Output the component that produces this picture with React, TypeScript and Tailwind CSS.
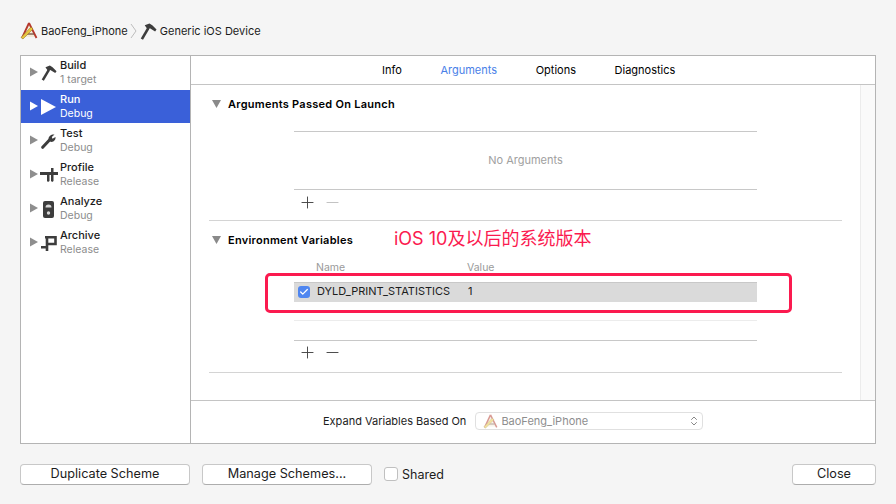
import { Check, ChevronsUpDown, Minus, Plus } from 'lucide-react';

// ── Icons ─────────────────────────────────────────────────────────────────────
function XcodeApp({ muted = false, size = 18 }: { muted?: boolean; size?: number }) {
  return (
    <svg width={size} height={size} viewBox="0 0 18 18" className={muted ? 'opacity-50' : ''}>
      <path d="M9 2 L3 15 H15 Z" fill="#f4ead8" />
      <path d="M9 1 L2 16 M9 1 L16.5 16" stroke="#b5382c" strokeWidth="1.8" fill="none" />
      <path d="M4.5 12 H14" stroke="#7d5a48" strokeWidth="1.4" />
      <path d="M1 15.5 L11 5 L13 7 L3 17 Z" fill="#e8c640" stroke="#8a6d1a" strokeWidth="0.5" />
    </svg>
  );
}

function Hammer({ size = 16, color = '#3d3d3d' }: { size?: number; color?: string }) {
  return (
    <svg width={size} height={size} viewBox="0 0 18 18">
      <path d="M2 17 L8.5 6" stroke={color} strokeWidth="2.8" />
      <path d="M5 2.5 L10 0.5 L13 2.5 L17.5 7 L16 9 L10.5 5.5 L8.5 7.5 Z" fill={color} />
    </svg>
  );
}

function Wrench() {
  return (
    <svg width="15" height="15" viewBox="0 0 15 15">
      <path d="M1.7 13.3 L8.5 6" stroke="#3d3d3d" strokeWidth="3" strokeLinecap="round" />
      <path d="M7.5 5 C7.5 2 10.5 0 13.5 0.5 L10.8 3 L11.5 4.8 L14.5 3 C15 6 12 9 9 7.5 Z" fill="#3d3d3d" />
    </svg>
  );
}

function Caliper() {
  return (
    <svg width="18" height="14" viewBox="0 0 18 14">
      <path d="M0 4 H18 V7 H0 Z" fill="#3d3d3d" />
      <path d="M7 7 H9.5 V13 L8 14 L7 13 Z M11 0 H13.5 V13 L12.2 14 L11 13 Z" fill="#3d3d3d" />
    </svg>
  );
}

function Gauge() {
  return (
    <svg width="11" height="17" viewBox="0 0 11 17">
      <rect x="0" y="0" width="11" height="17" rx="2" fill="#3d3d3d" />
      <path d="M2.5 6.5 A3 3 0 0 1 8.5 6.5 Z" fill="#d8d8d8" />
      <circle cx="5.5" cy="12" r="1.7" fill="#d8d8d8" />
    </svg>
  );
}

function Clamp() {
  return (
    <svg width="16" height="16" viewBox="0 0 16 16">
      <path d="M4 2.2 H14.5 V9 H6" stroke="#3d3d3d" strokeWidth="2.6" fill="none" />
      <path d="M6 3 V16" stroke="#3d3d3d" strokeWidth="2.6" />
      <path d="M0 11 H5 V13.5 H0 Z" fill="#3d3d3d" />
    </svg>
  );
}

function Disclosure({ white = false }: { white?: boolean }) {
  return (
    <svg width="8" height="10" viewBox="0 0 8 10" className="shrink-0 -mt-[2px]">
      <path d="M0 0.5 L8 5 L0 9.5 Z" fill={white ? '#ffffff' : '#8e8e8e'} />
    </svg>
  );
}

function SectionHead({ title }: { title: string }) {
  return (
    <div className="flex items-center gap-[7px] pl-[3px]">
      <svg width="9" height="8" viewBox="0 0 9 8" className="shrink-0">
        <path d="M0 0 H9 L4.5 8 Z" fill="#8a8a8a" />
      </svg>
      <span className="text-[11px] font-semibold tracking-[0.26px] text-black">{title}</span>
    </div>
  );
}

// ── Data ──────────────────────────────────────────────────────────────────────
const ACTIONS = [
  { name: 'Build', sub: '1 target', icon: <Hammer /> },
  { name: 'Run', sub: 'Debug', active: true },
  { name: 'Test', sub: 'Debug', icon: <Wrench /> },
  { name: 'Profile', sub: 'Release', icon: <Caliper /> },
  { name: 'Analyze', sub: 'Debug', icon: <Gauge /> },
  { name: 'Archive', sub: 'Release', icon: <Clamp /> },
];

const TABS = ['Info', 'Arguments', 'Options', 'Diagnostics'];

// ── Page ──────────────────────────────────────────────────────────────────────
export default function App() {
  return (
    <div className="w-[896px] h-[504px] overflow-hidden bg-[#f5f5f5] text-[11px] text-[#1c1c1c] flex flex-col px-[20px] font-['Inter','Noto_Sans_CJK_SC',sans-serif]">
      {/* breadcrumb */}
      <div className="h-[55px] flex items-center pt-[7px]">
        <XcodeApp />
        <span className="ml-[3px]">BaoFeng_iPhone</span>
        <svg width="7" height="16" viewBox="0 0 7 16" className="ml-[2px]">
          <path d="M1 1 L6 8 L1 15" stroke="#bdbdbd" fill="none" />
        </svg>
        <span className="ml-[3px]"><Hammer size={17} /></span>
        <span className="ml-[3px]">Generic iOS Device</span>
      </div>

      {/* main panel */}
      <div className="relative h-[389px] w-[856px] flex border border-[#b4b4b4] bg-white">
        <aside className="w-[170px] shrink-0 border-r border-[#b4b4b4]">
          {ACTIONS.map(a => (
            <div
              key={a.name}
              className={`flex items-center pl-[9px] ${a.active ? 'h-[33px] mb-[1px] bg-[#3a60d9] text-white' : 'h-[34px]'}`}
            >
              <Disclosure white={a.active} />
              <span className="w-[21px] ml-[1px] flex justify-center -translate-x-[1px]">
                {a.active ? (
                  <svg width="15" height="16" viewBox="0 0 15 16">
                    <path d="M0 0 L15 8 L0 16 Z" fill="#ffffff" />
                  </svg>
                ) : a.icon}
              </span>
              <div className="flex flex-col leading-[14px] gap-[1px] pb-[1px]">
                <span className="font-medium">{a.name}</span>
                <span className={`text-[10.5px] ${a.active ? 'text-white' : 'text-[#8c8c8c]'}`}>{a.sub}</span>
              </div>
            </div>
          ))}
        </aside>

        <div className="flex-1 flex flex-col min-w-0">
          {/* tabs */}
          <div className="h-[29px] shrink-0 flex items-center border-b border-[#c4c4c4] pl-[191px] gap-[38.6px]">
            {TABS.map(t => (
              <span key={t} className={t === 'Arguments' ? 'text-[#4a7fe8]' : 'text-black'}>{t}</span>
            ))}
          </div>

          {/* scroll area */}
          <div className="flex-1 flex min-h-0">
            <div className="flex-1 pl-[18px] pr-[18px]">
              <div className="h-[136px] border-b border-[#d4d4d4] pt-[11px]">
                <SectionHead title="Arguments Passed On Launch" />
                <div className="ml-[85px] mr-[85px] mt-[18px] h-[59px] pt-[1px] border-y border-[#c8c8c8] flex items-center justify-center text-[#a0a0a0]">
                  No Arguments
                </div>
                <div className="ml-[89px] mt-[3px] flex items-center gap-[6px] text-[#444]">
                  <Plus size={19} strokeWidth={1.2} />
                  <Minus size={19} strokeWidth={1.2} className="text-[#c0c0c0]" />
                </div>
              </div>

              <div className="h-[152px] border-b border-[#d4d4d4] pt-[11px]">
                <SectionHead title="Environment Variables" />
                <div className="ml-[85px] mr-[85px] mt-[13px]">
                  <div className="flex h-[13px] items-center pl-[22px] text-[10.5px] text-[#9a9a9a]">
                    <span className="w-[151px]">Name</span>
                    <span>Value</span>
                  </div>
                  <div className="mt-[7px] h-[20px] flex items-center bg-[#dadada] border-t border-[#c8c8c8] pl-[4px]">
                    <span className="w-[12px] h-[12px] rounded-[3px] bg-[#4f86f0] flex items-center justify-center">
                      <Check size={10} strokeWidth={3} className="text-white" />
                    </span>
                    <span className="ml-[7px] w-[151px] -mt-[2px]">DYLD_PRINT_STATISTICS</span>
                    <span className="-mt-[2px]">1</span>
                  </div>
                  <div className="mt-[18px] h-[20px] border-t border-[#ececec]" />
                  <div className="border-t border-[#c8c8c8]" />
                  <div className="ml-[4px] mt-[2px] flex items-center gap-[6px] text-[#444]">
                    <Plus size={19} strokeWidth={1.2} />
                    <Minus size={19} strokeWidth={1.2} />
                  </div>
                </div>
              </div>
            </div>
            <div className="w-[15px] shrink-0 bg-[#fafafa] border-l border-[#ececec]" />
          </div>

          {/* expand variables footer */}
          <div className="h-[43px] shrink-0 border-t border-[#c4c4c4] bg-white flex items-center pl-[132px] pb-[2px]">
            <span>Expand Variables Based On</span>
            <div className="ml-[9px] w-[228px] h-[18px] rounded-[4px] border border-[#e0e0e0] flex items-center pl-[7px] pr-[2px] text-[#8e8e8e]">
              <XcodeApp muted size={15} />
              <span className="ml-[3px] flex-1">BaoFeng_iPhone</span>
              <ChevronsUpDown size={12} className="text-[#888]" />
            </div>
          </div>
        </div>

        {/* red annotation */}
        <div className="absolute left-[244px] top-[217px] w-[527px] h-[40px] rounded-[5px] border-[3px] border-[#fb1a4f]" />
        <div className="absolute left-[373px] top-[172px] text-[18px] leading-[22px] text-[#fb1a4f]">iOS 10及以后的系统版本</div>
      </div>

      {/* bottom buttons */}
      <div className="flex-1 flex items-center">
        <button className="w-[170px] h-[21px] rounded-[4px] bg-white border border-[#c8c8c8] border-b-[#adadad] text-[12.7px] leading-none">Duplicate Scheme</button>
        <button className="ml-[12px] w-[170px] h-[21px] rounded-[4px] bg-white border border-[#c8c8c8] border-b-[#adadad] text-[12.7px] leading-none">Manage Schemes...</button>
        <span className="ml-[12px] w-[14px] h-[14px] rounded-[3px] bg-white border border-[#c0c0c0]" />
        <span className="ml-[4px] mt-[2px] text-[12.5px]">Shared</span>
        <button className="ml-auto w-[84px] h-[21px] rounded-[4px] bg-white border border-[#c8c8c8] border-b-[#adadad] text-[12.7px] leading-none">Close</button>
      </div>
    </div>
  );
}
